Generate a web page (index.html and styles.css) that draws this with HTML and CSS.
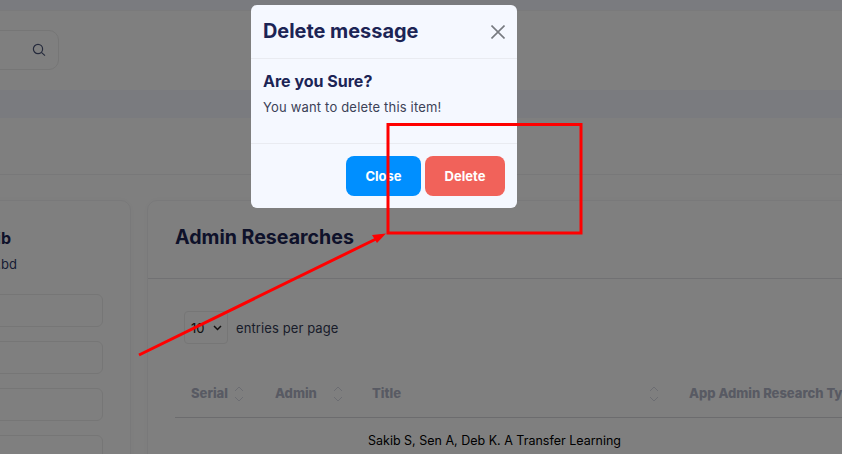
FILE: index.html
```html
<!DOCTYPE html>
<html lang="en">
<head>
    <meta charset="UTF-8">
    <meta name="viewport" content="width=device-width, initial-scale=1.0">
    <title>Admin Researches</title>
    <link rel="stylesheet" href="styles.css">
</head>
<body>
    <div class="page">
        <div class="top-strip"></div>
        <header class="topbar">
            <div class="search">
                <svg class="search-icon" width="14" height="14" viewBox="0 0 14 14" fill="none" stroke="#4a5578" stroke-width="1.2"><circle cx="6" cy="6" r="4.6"/><path d="M9.4 9.4 L13 12.6"/></svg>
            </div>
        </header>
        <div class="nav-strip"></div>
        <div class="breadcrumb"></div>

        <div class="content">
            <aside class="profile-card">
                <h4 class="profile-name">Sakib</h4>
                <p class="profile-mail">info@example.edu.bd</p>
                <div class="field"></div>
                <div class="field"></div>
                <div class="field"></div>
                <div class="field"></div>
            </aside>

            <main class="research-card">
                <h3 class="card-title">Admin Researches</h3>
                <div class="card-body">
                    <div class="length-row">
                        <div class="length-select">
                            <span>10</span>
                            <svg width="9" height="6" viewBox="0 0 9 6" fill="none" stroke="#222" stroke-width="1.5"><path d="M1 1 L4.5 4.5 L8 1"/></svg>
                        </div>
                        <span class="length-label">entries per page</span>
                    </div>
                    <table class="research-table">
                        <thead>
                            <tr>
                                <th class="col-serial">Serial<svg class="sort" width="10" height="16" viewBox="0 0 10 16" fill="none" stroke="#515a8a" stroke-width="1"><path d="M1 5 L5 1 L9 5 M1 11 L5 15 L9 11"/></svg></th>
                                <th class="col-admin">Admin<svg class="sort" width="10" height="16" viewBox="0 0 10 16" fill="none" stroke="#515a8a" stroke-width="1"><path d="M1 5 L5 1 L9 5 M1 11 L5 15 L9 11"/></svg></th>
                                <th class="col-title">Title<svg class="sort" width="10" height="16" viewBox="0 0 10 16" fill="none" stroke="#515a8a" stroke-width="1"><path d="M1 5 L5 1 L9 5 M1 11 L5 15 L9 11"/></svg></th>
                                <th class="col-type">App Admin Research Type</th>
                            </tr>
                        </thead>
                        <tbody>
                            <tr>
                                <td></td>
                                <td></td>
                                <td class="cell-title" colspan="2">Sakib S, Sen A, Deb K. A Transfer Learning</td>
                            </tr>
                        </tbody>
                    </table>
                </div>
            </main>
        </div>
    </div>

    <div class="backdrop"></div>

    <div class="modal">
        <div class="modal-header">
            <h5 class="modal-title">Delete message</h5>
            <svg class="modal-close" width="14" height="14" viewBox="0 0 14 14" fill="none" stroke="#777a80" stroke-width="1.6"><path d="M0.5 0.5 L13.5 13.5 M13.5 0.5 L0.5 13.5"/></svg>
        </div>
        <div class="modal-body">
            <h4 class="modal-question">Are you Sure?</h4>
            <p class="modal-text">You want to delete this item!</p>
        </div>
        <div class="modal-footer">
            <button class="btn btn-close">Close</button>
            <button class="btn btn-delete">Delete</button>
        </div>
    </div>

    <!-- red annotation drawn on top of the screenshot -->
    <svg class="annotation" width="842" height="454" viewBox="0 0 842 454" fill="none">
        <rect x="388" y="124.5" width="193" height="108.5" stroke="#ff0000" stroke-width="3"/>
        <path d="M139 355 L378 238" stroke="#ff0000" stroke-width="3"/>
        <path d="M386 233.5 L372 235 L377 243 Z" fill="#ff0000"/>
    </svg>
</body>
</html>
```

FILE: styles.css
```css
* {
    box-sizing: border-box;
    font-family: 'Inter', 'Open Sans', sans-serif;
}

html, body {
    height: 100%;
}

body {
    margin: 0;
    background-color: #fff;
    overflow: hidden;
}

.page {
    width: 1100px;
    margin-left: -200px;
}

.top-strip {
    height: 10px;
    background-color: #f4f6ff;
}

.topbar {
    height: 80px;
    padding-top: 19px;
    border-top: 1px solid #f4f4f6;
}

.search {
    display: flex;
    align-items: center;
    justify-content: flex-end;
    width: 259px;
    height: 40px;
    padding-right: 12px;
    border: 1px solid #ececec;
    border-radius: 10px;
}

.nav-strip {
    height: 28px;
    background-color: #f4f6ff;
}

.breadcrumb {
    height: 57px;
    border-bottom: 1px solid #f0f0f2;
}

.content {
    display: flex;
    gap: 16px;
    padding-top: 25px;
}

.profile-card {
    flex: 0 0 331px;
    height: 300px;
    padding-top: 27px;
    padding-right: 27px;
    border: 1px solid #f2f2f4;
    border-radius: 10px;
    box-shadow: 0 0 8px rgba(0, 0, 0, 0.03);
}

.profile-name {
    margin: 0;
    font-size: 16px;
    font-weight: 700;
    line-height: 20px;
    text-align: right;
    color: #1c2455;
    padding-right: 92px;
}

.profile-mail {
    margin: 7px 0 21px;
    font-size: 13px;
    line-height: 18px;
    text-align: right;
    color: #2f3a6b;
    padding-right: 86px;
}

.field {
    height: 33px;
    margin-bottom: 14px;
    border: 1px solid #ececec;
    border-radius: 6px;
}

.research-card {
    flex: 1;
    border: 1px solid #f2f2f4;
    border-radius: 10px 0 0 0;
    min-width: 0;
    box-shadow: 0 0 8px rgba(0, 0, 0, 0.03);
}

.card-title {
    margin: 0;
    height: 78px;
    padding: 24px 27px 0;
    font-size: 19.6px;
    font-weight: 700;
    line-height: 24px;
    color: #1c2455;
    border-bottom: 1px solid #e3e3e6;
}

.card-body {
    padding: 32px 0 0 27px;
}

.length-row {
    display: flex;
    align-items: center;
    gap: 8px;
    padding-left: 9px;
}

.length-select {
    display: flex;
    align-items: center;
    justify-content: space-between;
    width: 44px;
    height: 33px;
    padding: 0 5px 0 6px;
    border: 1px solid #ececec;
    border-radius: 4px;
    font-size: 13px;
    color: #222;
}

.length-label {
    font-size: 13px;
    letter-spacing: 0.1px;
    color: #333a55;
}

.research-table {
    width: 800px;
    margin-top: 28px;
    border-collapse: collapse;
    table-layout: fixed;
}

.research-table th {
    position: relative;
    height: 45px;
    padding: 0 0 2px 16px;
    text-align: left;
    font-size: 13px;
    font-weight: 800;
    white-space: nowrap;
    overflow: hidden;
    color: #b0b4c6;
    border-bottom: 1px solid #d9d9dc;
}

.col-serial { width: 84px; }
.col-admin { width: 97px; }
.col-title { width: 317px; }

.sort {
    position: absolute;
    top: 14px;
    right: 15px;
    opacity: 0.22;
}

.col-admin .sort { right: 13px; }
.col-title .sort { right: 14px; }

.research-table td {
    padding: 14px 0 0 12px;
    font-size: 12.5px;
    line-height: 18px;
    color: #000;
    white-space: nowrap;
}

.backdrop {
    position: fixed;
    inset: 0;
    background-color: rgba(0, 0, 0, 0.5);
}

.modal {
    position: fixed;
    top: 5px;
    left: 251px;
    width: 266px;
    height: 203px;
    background-color: #f5f8ff;
    border-radius: 6px;
}

.modal-header {
    display: flex;
    align-items: center;
    justify-content: space-between;
    height: 54px;
    padding: 0 12px;
    border-bottom: 1px solid #e9ebf1;
}

.modal-title {
    margin: 0 0 2px;
    font-size: 19.9px;
    font-weight: 700;
    color: #1c2455;
}

.modal-body {
    height: 85px;
    padding: 12px 12px 0;
    border-bottom: 1px solid #e9ebf1;
}

.modal-question {
    margin: 0;
    font-size: 16px;
    font-weight: 700;
    line-height: 20px;
    color: #1c2455;
}

.modal-text {
    margin: 7px 0 0;
    font-size: 13px;
    letter-spacing: 0.18px;
    line-height: 18px;
    color: #3c4257;
}

.modal-footer {
    display: flex;
    justify-content: flex-end;
    gap: 4px;
    padding: 12px 12px 0;
}

.btn {
    height: 40px;
    border: none;
    border-radius: 8px;
    font-size: 13px;
    font-weight: 700;
    color: #fff;
}

.btn-close {
    width: 75px;
    background-color: #008fff;
}

.btn-delete {
    width: 80px;
    background-color: #f1625a;
}

.annotation {
    position: fixed;
    top: 0;
    left: 0;
}
```
